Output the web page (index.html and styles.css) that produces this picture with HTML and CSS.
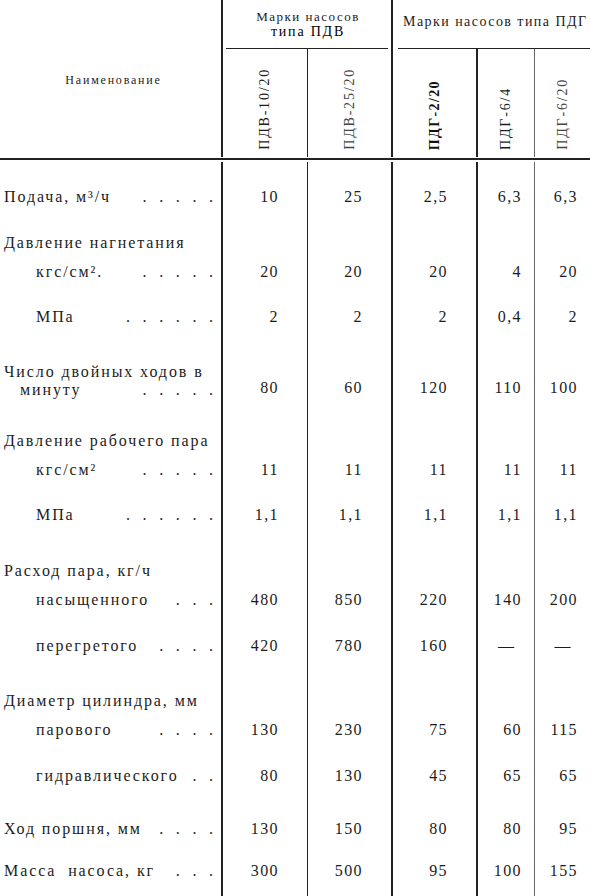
FILE: index.html
```html
<!DOCTYPE html>
<html lang="ru">
<head>
<meta charset="utf-8">
<title>Марки насосов</title>
<link rel="stylesheet" href="styles.css">
</head>
<body>
<div class="sheet">
  <div class="head">
    <div class="h-name">Наименование</div>
    <div class="h-group h-pdv">
      <div class="h-title">Марки насосов<br><span class="dark">типа ПДВ</span></div>
      <div class="uline"></div>
    </div>
    <div class="h-group h-pdg">
      <div class="h-title">Марки насосов типа ПДГ</div>
      <div class="uline"></div>
    </div>
    <div class="h-sub"><span class="vt">ПДВ-10/20</span></div>
    <div class="h-sub"><span class="vt light">ПДВ-25/20</span></div>
    <div class="h-sub"><span class="vt bold">ПДГ-2/20</span></div>
    <div class="h-sub"><span class="vt">ПДГ-6/4</span></div>
    <div class="h-sub"><span class="vt light">ПДГ-6/20</span></div>
  </div>
  <div class="rule"></div>
  <div class="body">
    <div class="row p26">
      <div class="lab"><span>Подача, м³/ч</span><span class="dots">. . . . .</span></div>
      <div class="v">10</div><div class="v">25</div><div class="v">2,5</div><div class="v">6,3</div><div class="v">6,3</div>
    </div>
    <div class="row p28">
      <div class="lab"><span>Давление нагнетания</span></div>
      <div class="v"></div><div class="v"></div><div class="v"></div><div class="v"></div><div class="v"></div>
    </div>
    <div class="row p11">
      <div class="lab ind"><span>кгс/см². </span><span class="dots">. . . . .</span></div>
      <div class="v">20</div><div class="v">20</div><div class="v">20</div><div class="v">4</div><div class="v">20</div>
    </div>
    <div class="row p27">
      <div class="lab ind"><span>МПа</span><span class="dots">. . . . . .</span></div>
      <div class="v">2</div><div class="v">2</div><div class="v">2</div><div class="v">0,4</div><div class="v">2</div>
    </div>
    <div class="row p37">
      <div class="lab two">
        <div class="l1">Число двойных ходов в</div>
        <div class="l2"><span>минуту</span><span class="dots">. . . . .</span></div>
      </div>
      <div class="v end">80</div><div class="v end">60</div><div class="v end">120</div><div class="v end">110</div><div class="v end">100</div>
    </div>
    <div class="row p33">
      <div class="lab"><span>Давление рабочего пара</span></div>
      <div class="v"></div><div class="v"></div><div class="v"></div><div class="v"></div><div class="v"></div>
    </div>
    <div class="row p11">
      <div class="lab ind"><span>кгс/см²</span><span class="dots">. . . . .</span></div>
      <div class="v">11</div><div class="v">11</div><div class="v">11</div><div class="v">11</div><div class="v">11</div>
    </div>
    <div class="row p27">
      <div class="lab ind"><span>МПа</span><span class="dots">. . . . . .</span></div>
      <div class="v">1,1</div><div class="v">1,1</div><div class="v">1,1</div><div class="v">1,1</div><div class="v">1,1</div>
    </div>
    <div class="row p38">
      <div class="lab"><span>Расход пара, кг/ч</span></div>
      <div class="v"></div><div class="v"></div><div class="v"></div><div class="v"></div><div class="v"></div>
    </div>
    <div class="row p11">
      <div class="lab ind"><span>насыщенного</span><span class="dots">. . .</span></div>
      <div class="v">480</div><div class="v">850</div><div class="v">220</div><div class="v">140</div><div class="v">200</div>
    </div>
    <div class="row p28">
      <div class="lab ind"><span>перегретого</span><span class="dots">. . . .</span></div>
      <div class="v">420</div><div class="v">780</div><div class="v">160</div><div class="v dash">—</div><div class="v dash">—</div>
    </div>
    <div class="row p37">
      <div class="lab"><span>Диаметр цилиндра, мм</span></div>
      <div class="v"></div><div class="v"></div><div class="v"></div><div class="v"></div><div class="v"></div>
    </div>
    <div class="row p11">
      <div class="lab ind"><span>парового</span><span class="dots">. . . .</span></div>
      <div class="v">130</div><div class="v">230</div><div class="v">75</div><div class="v">60</div><div class="v">115</div>
    </div>
    <div class="row p28">
      <div class="lab ind"><span>гидравлического</span><span class="dots">. .</span></div>
      <div class="v">80</div><div class="v">130</div><div class="v">45</div><div class="v">65</div><div class="v">65</div>
    </div>
    <div class="row p35">
      <div class="lab"><span>Ход поршня, мм</span><span class="dots">. . . .</span></div>
      <div class="v">130</div><div class="v">150</div><div class="v">80</div><div class="v">80</div><div class="v">95</div>
    </div>
    <div class="row p24">
      <div class="lab"><span>Масса&nbsp; насоса, кг</span><span class="dots">. . .</span></div>
      <div class="v">300</div><div class="v">500</div><div class="v">95</div><div class="v">100</div><div class="v">155</div>
    </div>
    <div class="row fill">
      <div class="lab"></div>
      <div class="v"></div><div class="v"></div><div class="v"></div><div class="v"></div><div class="v"></div>
    </div>
  </div>
</div>
</body>
</html>
```

FILE: styles.css
```css
* { box-sizing: border-box; }

html, body {
  margin: 0;
  padding: 0;
  background: #fff;
}

.sheet {
  width: 590px;
  height: 896px;
  overflow: hidden;
  display: flex;
  flex-direction: column;
  font-family: "Liberation Serif", "Times New Roman", serif;
  color: #1c1c1c;
  background: #fff;
}

/* ---------- header ---------- */
.head {
  display: grid;
  grid-template-columns: 223px 85px 85px 85px 57px 55px;
  grid-template-rows: 49px 108px;
  flex: none;
}

.h-name {
  grid-row: 1 / 3;
  grid-column: 1;
  border-right: 2px solid #222;
  display: flex;
  align-items: center;
  justify-content: center;
  font-size: 12px;
  letter-spacing: 1.8px;
  padding-top: 4px;
  padding-left: 6px;
}

.h-group {
  display: flex;
  flex-direction: column;
}

.h-pdv {
  grid-column: 2 / 4;
  grid-row: 1;
  border-right: 2px solid #222;
}

.h-pdg {
  grid-column: 4 / 7;
  grid-row: 1;
}

.h-title {
  flex: 1;
  display: flex;
  align-items: center;
  justify-content: center;
  text-align: center;
  white-space: nowrap;
}

.h-pdv .h-title {
  display: block;
  font-size: 13px;
  line-height: 15px;
  letter-spacing: 1.5px;
  padding-top: 9px;
  padding-left: 2px;
}

.h-pdv .dark {
  color: #000;
  font-size: 14px;
  letter-spacing: 1.8px;
}

.h-pdg .h-title {
  font-size: 14px;
  letter-spacing: 1.45px;
  justify-content: flex-start;
  padding-left: 10px;
  padding-bottom: 4px;
}

.uline {
  height: 1px;
  background: #222;
  flex: none;
}

.h-pdv .uline { margin: 0 3px 0 3px; }
.h-pdg .uline { margin: 0 0 0 5px; }

.h-sub {
  grid-row: 2;
  display: flex;
  align-items: flex-end;
  justify-content: center;
  padding-bottom: 7px;
  padding-top: 2px;
}

.h-sub:nth-child(4) { border-right: 1px solid #222; }
.h-sub:nth-child(5) { border-right: 2px solid #222; }
.h-sub:nth-child(6) { border-right: 2px solid #222; }
.h-sub:nth-child(7) { border-right: 1px solid #666; }

.vt {
  writing-mode: vertical-rl;
  transform: rotate(180deg);
  font-size: 14px;
  letter-spacing: 1.8px;
  white-space: nowrap;
}

.vt.bold { font-weight: bold; color: #111; letter-spacing: 1.4px; }
.vt.light { color: #444; }

.rule {
  flex: none;
  height: 2px;
  margin: 1px 0 2px;
  background: #222;
}

/* ---------- body ---------- */
.body {
  flex: 1;
  display: flex;
  flex-direction: column;
}

.row {
  display: grid;
  grid-template-columns: 223px 85px 85px 85px 57px 55px;
  flex: none;
  font-size: 16px;
  line-height: 18px;
}

.row > :nth-child(1) { border-right: 2px solid #222; }
.row > :nth-child(2) { border-right: 1px solid #222; }
.row > :nth-child(3) { border-right: 2px solid #222; }
.row > :nth-child(4) { border-right: 2px solid #222; }
.row > :nth-child(5) { border-right: 1px solid #666; }

.row.fill { flex: 1; }

.p11 > * { padding-top: 11px; }
.p24 > * { padding-top: 24px; }
.p26 > * { padding-top: 26px; }
.p27 > * { padding-top: 27px; }
.p28 > * { padding-top: 28px; }
.p33 > * { padding-top: 33px; }
.p35 > * { padding-top: 35px; }
.p37 > * { padding-top: 37px; }
.p38 > * { padding-top: 38px; }

.lab {
  display: flex;
  justify-content: space-between;
  padding-left: 4px;
  padding-right: 8px;
  letter-spacing: 1.9px;
  white-space: nowrap;
}

.lab.ind { padding-left: 36px; }

.lab.two {
  display: block;
}

.lab.two .l2 {
  display: flex;
  justify-content: space-between;
  padding-left: 16px;
}

.dots {
  letter-spacing: 0;
  word-spacing: 8.6px;
  margin-left: auto;
}

.v {
  text-align: right;
  padding-right: 28px;
  letter-spacing: 1.4px;
}

.row > :nth-child(5),
.row > :nth-child(6) {
  padding-right: 12px;
}

.row > .v.end {
  display: flex;
  align-items: flex-end;
  justify-content: flex-end;
  padding-bottom: 2px;
}

.row > .v.dash {
  text-align: center;
  padding-right: 0;
  letter-spacing: 0;
}
```
